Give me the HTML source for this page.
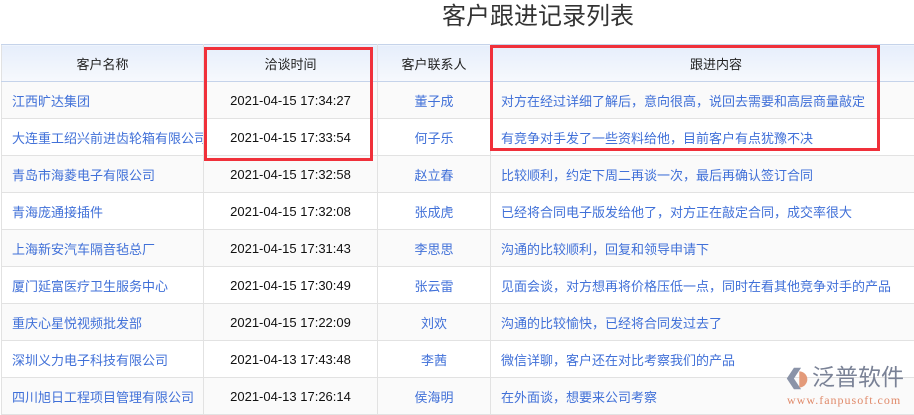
<!DOCTYPE html>
<html><head><meta charset="utf-8"><style>
*{margin:0;padding:0;box-sizing:border-box}
body{width:914px;height:415px;overflow:hidden;background:#fff;font-family:"Liberation Sans","Noto Sans CJK SC",sans-serif;position:relative}
.title{position:absolute;left:0;width:1076px;top:0;height:34px;text-align:center;font-size:24px;color:#333;line-height:34px}
table{position:absolute;left:1px;top:44px;border-collapse:collapse;width:940px;table-layout:fixed}
th,td{height:37px;border:1px solid #e2e2e2;font-size:13px;white-space:nowrap;overflow:hidden}
th{background:linear-gradient(#e6eefb,#f7f9fd);font-weight:normal;color:#222;border-top:1px solid #c5d3ea;border-bottom:1px solid #c5d3ea}
td{color:#4070d8}
td.n{padding-left:10px}
td.t{color:#111;text-align:center}
td.c{text-align:center}
td.x{padding-left:10px}
tr:nth-child(even) td{background:#fafafa}
.box{position:absolute;border:3px solid #f0303a}
.logo{position:absolute;left:785px;top:366px}
</style></head><body>
<div class="title">客户跟进记录列表</div>
<table>
<colgroup><col style="width:202px"><col style="width:174px"><col style="width:113px"><col style="width:451px"></colgroup>
<tr><th>客户名称</th><th>洽谈时间</th><th>客户联系人</th><th>跟进内容</th></tr>
<tr><td class="n">江西旷达集团</td><td class="t">2021-04-15 17:34:27</td><td class="c">董子成</td><td class="x">对方在经过详细了解后，意向很高，说回去需要和高层商量敲定</td></tr>
<tr><td class="n">大连重工绍兴前进齿轮箱有限公司</td><td class="t">2021-04-15 17:33:54</td><td class="c">何子乐</td><td class="x">有竞争对手发了一些资料给他，目前客户有点犹豫不决</td></tr>
<tr><td class="n">青岛市海菱电子有限公司</td><td class="t">2021-04-15 17:32:58</td><td class="c">赵立春</td><td class="x">比较顺利，约定下周二再谈一次，最后再确认签订合同</td></tr>
<tr><td class="n">青海庞通接插件</td><td class="t">2021-04-15 17:32:08</td><td class="c">张成虎</td><td class="x">已经将合同电子版发给他了，对方正在敲定合同，成交率很大</td></tr>
<tr><td class="n">上海新安汽车隔音毡总厂</td><td class="t">2021-04-15 17:31:43</td><td class="c">李思思</td><td class="x">沟通的比较顺利，回复和领导申请下</td></tr>
<tr><td class="n">厦门延富医疗卫生服务中心</td><td class="t">2021-04-15 17:30:49</td><td class="c">张云雷</td><td class="x">见面会谈，对方想再将价格压低一点，同时在看其他竞争对手的产品</td></tr>
<tr><td class="n">重庆心星悦视频批发部</td><td class="t">2021-04-15 17:22:09</td><td class="c">刘欢</td><td class="x">沟通的比较愉快，已经将合同发过去了</td></tr>
<tr><td class="n">深圳义力电子科技有限公司</td><td class="t">2021-04-13 17:43:48</td><td class="c">李茜</td><td class="x">微信详聊，客户还在对比考察我们的产品</td></tr>
<tr><td class="n">四川旭日工程项目管理有限公司</td><td class="t">2021-04-13 17:26:14</td><td class="c">侯海明</td><td class="x">在外面谈，想要来公司考察</td></tr>
</table>
<div class="box" style="left:204px;top:47px;width:169px;height:114px"></div>
<div class="box" style="left:490px;top:45px;width:390px;height:106px"></div>
<div class="logo">
<svg width="25" height="25" viewBox="0 0 28 28" style="position:absolute;left:0;top:0"><path d="M10 2 L18 2 L10 14 L18 26 L10 26 L2 14 Z" fill="#8a93a8"/><path d="M16 6 a9 9 0 1 1 0 18 Z" fill="#e39a7a"/></svg>
<div style="position:absolute;left:27px;top:-2px;font-size:23px;line-height:26px;color:#7a8296;white-space:nowrap">泛普软件</div>
<div style="position:absolute;left:2px;top:27px;font-family:'Liberation Serif',serif;font-size:12px;letter-spacing:1px;color:#e08a6a;white-space:nowrap">www.fanpusoft.com</div>
</div>
</body></html>
